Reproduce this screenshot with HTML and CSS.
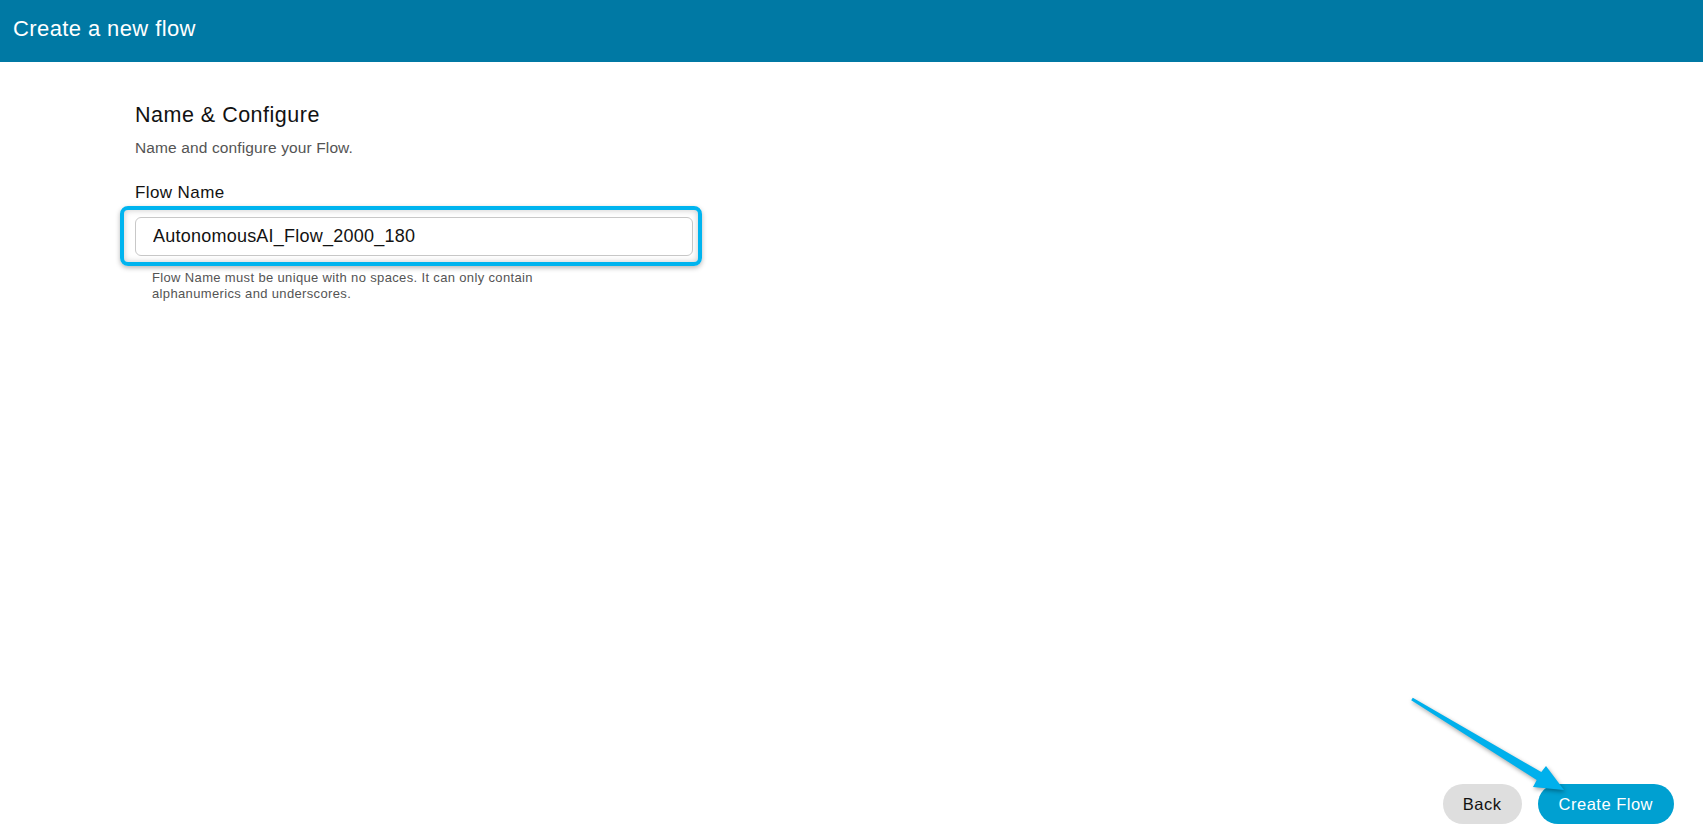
FILE: index.html
```html
<!DOCTYPE html>
<html lang="en">
<head>
<meta charset="utf-8">
<title>Create a new flow</title>
<link rel="stylesheet" href="styles.css">
</head>
<body>
<header class="topbar">
  <h1 class="topbar-title">Create a new flow</h1>
</header>
<main class="content">
  <section class="form">
    <h2 class="section-title">Name &amp; Configure</h2>
    <p class="section-desc">Name and configure your Flow.</p>
    <label class="field-label" for="flowName">Flow Name</label>
    <div class="field-wrap">
      <input id="flowName" class="field-input" type="text" value="AutonomousAI_Flow_2000_180">
      <div class="focus-ring"></div>
    </div>
    <p class="field-help">Flow Name must be unique with no spaces. It can only contain alphanumerics and underscores.</p>
  </section>
</main>
<footer class="actions">
  <button class="btn btn-secondary" type="button">Back</button>
  <button class="btn btn-primary" type="button">Create Flow</button>
</footer>
<svg class="callout-arrow" viewBox="0 0 1703 838" width="1703" height="838" aria-hidden="true">
  <polygon points="1412.8,697.7 1541.3,772.1 1546,766 1564,790 1533,787 1536.7,779.9 1411.2,700.3" fill="#00b0ec"/>
</svg>
</body>
</html>
```
FILE: styles.css
```css
html, body {
  margin: 0;
  padding: 0;
}
body {
  position: relative;
  height: 100vh;
  display: flex;
  flex-direction: column;
  background: #ffffff;
  font-family: "Liberation Sans", Arial, sans-serif;
  color: #121212;
  overflow: hidden;
}
.topbar {
  box-sizing: border-box;
  height: 62px;
  flex: none;
  background: #0079a4;
  padding: 16.5px 13px 0;
}
.topbar-title {
  margin: 0;
  font-size: 22px;
  line-height: 24px;
  letter-spacing: 0.4px;
  font-weight: normal;
  color: #ffffff;
}
.content {
  flex: 1;
  padding: 41px 0 0 135px;
}
.form {
  display: flex;
  flex-direction: column;
  align-items: flex-start;
}
.section-title {
  margin: 0;
  font-size: 21.5px;
  line-height: 24px;
  letter-spacing: 0.5px;
  font-weight: normal;
  color: #121212;
}
.section-desc {
  margin: 11px 0 0;
  font-size: 15.5px;
  line-height: 20px;
  letter-spacing: 0.12px;
  color: #545454;
}
.field-label {
  margin-top: 25.2px;
  font-size: 17px;
  line-height: 20px;
  letter-spacing: 0.4px;
  color: #121212;
}
.field-wrap {
  position: relative;
  margin-top: 13.9px;
  width: 558px;
}
.field-input {
  box-sizing: border-box;
  display: block;
  width: 100%;
  height: 39px;
  margin: 0;
  padding: 0 12px 0 17px;
  border: 1px solid #c8c8c8;
  border-radius: 6px;
  background: #ffffff;
  font-family: inherit;
  font-size: 18px;
  letter-spacing: 0.23px;
  color: #121212;
  outline: none;
}
.focus-ring {
  position: absolute;
  top: -11px;
  left: -15px;
  right: -9px;
  bottom: -10px;
  border: 4px solid #00b4ef;
  border-radius: 8px;
  box-shadow: 0 2px 5px rgba(0, 0, 0, 0.28), inset 0 0 6px rgba(0, 0, 0, 0.22);
  pointer-events: none;
}
.field-help {
  margin: 13.8px 0 0;
  padding-left: 17px;
  width: 400px;
  font-size: 13px;
  line-height: 16px;
  letter-spacing: 0.35px;
  color: #545454;
}
.actions {
  flex: none;
  display: flex;
  justify-content: flex-end;
  gap: 16px;
  padding: 0 29px 14px 0;
}
.btn {
  height: 40px;
  border: none;
  border-radius: 20px;
  font-family: inherit;
  font-size: 16.5px;
  line-height: 40px;
  letter-spacing: 0.5px;
  cursor: pointer;
}
.btn-secondary {
  padding: 0 20px;
  background: #dedede;
  color: #121212;
}
.btn-primary {
  padding: 0 21px;
  background: #00a0d1;
  color: #ffffff;
}
.callout-arrow {
  position: absolute;
  left: 0;
  top: 0;
  pointer-events: none;
  filter: drop-shadow(1px 2px 2px rgba(0, 0, 0, 0.35));
}
```
